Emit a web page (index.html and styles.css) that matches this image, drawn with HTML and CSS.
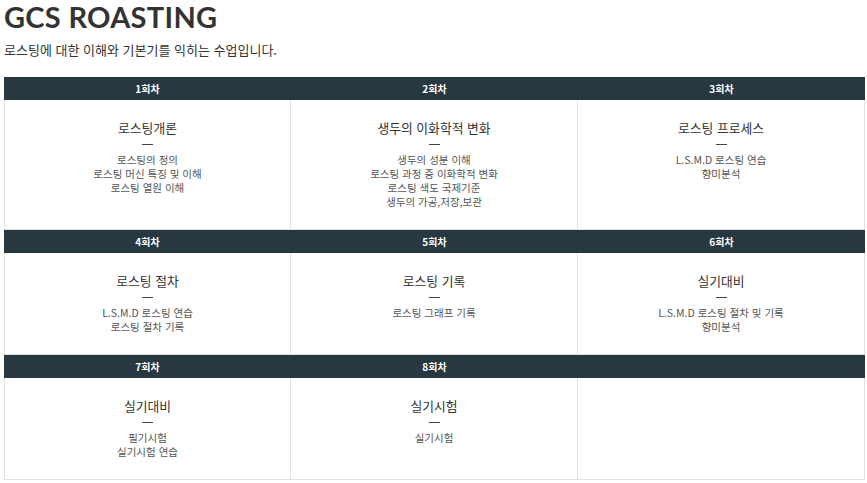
FILE: index.html
```html
<!DOCTYPE html>
<html lang="ko">
<head>
<meta charset="utf-8">
<title>GCS ROASTING</title>
<link rel="stylesheet" href="styles.css">
</head>
<body>
<div class="page">
  <h1 class="title">GCS ROASTING</h1>
  <p class="lead">로스팅에 대한 이해와 기본기를 익히는 수업입니다.</p>
  <div class="grid">
    <div class="cell">
      <div class="cell-head">1회차</div>
      <div class="cell-body">
        <div class="cell-title">로스팅개론</div>
        <div class="dash"></div>
        <ul class="items"><li>로스팅의 정의</li><li>로스팅 머신 특징 및 이해</li><li>로스팅 열원 이해</li></ul>
      </div>
    </div>
    <div class="cell">
      <div class="cell-head">2회차</div>
      <div class="cell-body">
        <div class="cell-title">생두의 이화학적 변화</div>
        <div class="dash"></div>
        <ul class="items"><li>생두의 성분 이해</li><li>로스팅 과정 중 이화학적 변화</li><li>로스팅 색도 국제기준</li><li>생두의 가공,저장,보관</li></ul>
      </div>
    </div>
    <div class="cell">
      <div class="cell-head">3회차</div>
      <div class="cell-body">
        <div class="cell-title">로스팅 프로세스</div>
        <div class="dash"></div>
        <ul class="items"><li>L.S.M.D 로스팅 연습</li><li>향미분석</li></ul>
      </div>
    </div>
    <div class="cell">
      <div class="cell-head">4회차</div>
      <div class="cell-body">
        <div class="cell-title">로스팅 절차</div>
        <div class="dash"></div>
        <ul class="items"><li>L.S.M.D 로스팅 연습</li><li>로스팅 절차 기록</li></ul>
      </div>
    </div>
    <div class="cell">
      <div class="cell-head">5회차</div>
      <div class="cell-body">
        <div class="cell-title">로스팅 기록</div>
        <div class="dash"></div>
        <ul class="items"><li>로스팅 그래프 기록</li></ul>
      </div>
    </div>
    <div class="cell">
      <div class="cell-head">6회차</div>
      <div class="cell-body">
        <div class="cell-title">실기대비</div>
        <div class="dash"></div>
        <ul class="items"><li>L.S.M.D 로스팅 절차 및 기록</li><li>향미분석</li></ul>
      </div>
    </div>
    <div class="cell">
      <div class="cell-head">7회차</div>
      <div class="cell-body">
        <div class="cell-title">실기대비</div>
        <div class="dash"></div>
        <ul class="items"><li>필기시험</li><li>실기시험 연습</li></ul>
      </div>
    </div>
    <div class="cell">
      <div class="cell-head">8회차</div>
      <div class="cell-body">
        <div class="cell-title">실기시험</div>
        <div class="dash"></div>
        <ul class="items"><li>실기시험</li></ul>
      </div>
    </div>
    <div class="cell">
      <div class="cell-head"></div>
      <div class="cell-body"></div>
    </div>
  </div>
</div>
</body>
</html>
```
FILE: styles.css
```css
html, body {
  margin: 0;
  padding: 0;
  background: #fff;
}
body {
  font-family: "Noto Sans CJK KR", "Noto Sans", sans-serif;
  color: #333;
}
.page {
  padding: 0 2px 0 4px;
}
.title {
  margin: 0;
  font-family: "Lato", "Noto Sans", sans-serif;
  font-weight: 700;
  font-size: 29px;
  line-height: 34px;
  color: #333;
  letter-spacing: 0.3px;
}
.lead {
  margin: 7px 0 0;
  font-size: 13px;
  line-height: 18px;
  color: #333;
}
.grid {
  margin-top: 18px;
  display: grid;
  grid-template-columns: repeat(3, 1fr);
}
.cell {
  display: flex;
  flex-direction: column;
}
.cell-head {
  height: 23px;
  line-height: 23px;
  background: #273840;
  color: #fff;
  font-weight: 700;
  font-size: 10px;
  text-align: center;
}
.cell-body {
  flex: 1;
  border-right: 1px solid #e1e1e1;
  border-bottom: 1px solid #e1e1e1;
  padding: 18px 10px 20px;
  text-align: center;
}
.cell:nth-child(3n+1) .cell-body {
  border-left: 1px solid #e1e1e1;
}
.cell-title {
  font-size: 12.8px;
  line-height: 20px;
  color: #333;
}
.dash {
  width: 11px;
  height: 1px;
  background: #444;
  margin: 6px auto 0;
}
.items {
  list-style: none;
  margin: 8px 0 0;
  padding: 0;
  font-size: 10.5px;
  line-height: 14px;
  color: #555;
}
```
